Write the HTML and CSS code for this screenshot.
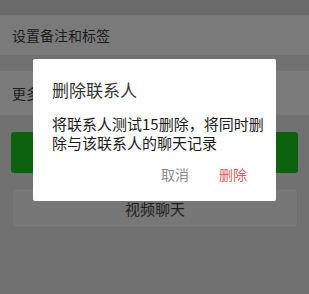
FILE: index.html
```html
<!DOCTYPE html>
<html lang="zh-CN">
<head>
<meta charset="utf-8">
<link rel="stylesheet" href="styles.css">
</head>
<body>
<div class="page">
  <div class="topbar"></div>
  <div class="row row-first">设置备注和标签</div>
  <div class="row row-second">更多信息</div>
  <div class="btn btn-green"></div>
  <div class="btn btn-video">视频聊天</div>
</div>
<div class="dialog">
  <div class="dialog-title">删除联系人</div>
  <div class="dialog-body">将联系人测试15删除，将同时删除与该联系人的聊天记录</div>
  <div class="dialog-actions">
    <span class="action action-cancel">取消</span>
    <span class="action action-delete">删除</span>
  </div>
</div>
</body>
</html>
```
FILE: styles.css
```css
html, body {
  margin: 0;
  padding: 0;
  height: 100%;
}
body {
  background: #717171;
  font-family: "Noto Sans CJK SC", "Noto Sans", sans-serif;
  color: #1c1c1c;
  position: relative;
  overflow: hidden;
}
.page {
  display: flex;
  flex-direction: column;
}
.topbar {
  height: 15px;
  background: #6b6b6b;
}
.row {
  background: #7a7a7a;
  padding-left: 12px;
  font-size: 14px;
  display: flex;
  align-items: center;
}
.row-first {
  height: 40px;
}
.row-second {
  height: 44px;
  margin-top: 16px;
}
.btn {
  border-radius: 3px;
  box-sizing: border-box;
}
.btn-green {
  height: 41px;
  margin: 17px 11px 0 11px;
  background: #0d620d;
}
.btn-video {
  height: 40px;
  margin: 15px 11px 0 12px;
  background: #777777;
  border: 1px solid #6e6e6e;
  font-size: 15px;
  display: flex;
  align-items: center;
  justify-content: center;
  color: #1e1e1e;
}
.dialog {
  position: absolute;
  left: 33px;
  top: 59px;
  width: 243px;
  height: 142px;
  background: #ffffff;
  border-radius: 2px;
  box-sizing: border-box;
  padding: 19px 6px 0 19px;
}
.dialog-title {
  font-size: 17px;
  line-height: 24px;
  color: #333333;
}
.dialog-body {
  margin-top: 12px;
  font-size: 15px;
  line-height: 19px;
  color: #1a1a1a;
}
.dialog-actions {
  margin-top: 12px;
  display: flex;
  justify-content: flex-end;
  gap: 30px;
  padding-right: 23px;
  font-size: 14px;
  line-height: 20px;
}
.action-cancel {
  color: #8a8a8a;
}
.action-delete {
  color: #e05a5a;
}
```
